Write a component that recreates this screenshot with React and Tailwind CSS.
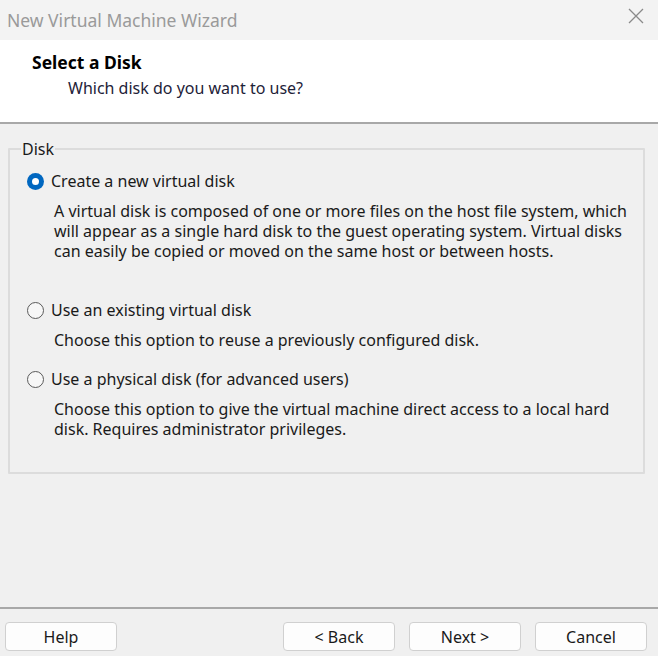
const diskOptions = [
  {
    id: "new",
    label: "Create a new virtual disk",
    lines: [
      "A virtual disk is composed of one or more files on the host file system, which",
      "will appear as a single hard disk to the guest operating system. Virtual disks",
      "can easily be copied or moved on the same host or between hosts.",
    ],
    checked: true,
    spacing: "mb-[38px]",
  },
  {
    id: "existing",
    label: "Use an existing virtual disk",
    lines: ["Choose this option to reuse a previously configured disk."],
    spacing: "mb-[18px]",
  },
  {
    id: "physical",
    label: "Use a physical disk (for advanced users)",
    lines: [
      "Choose this option to give the virtual machine direct access to a local hard",
      "disk. Requires administrator privileges.",
    ],
    spacing: "",
  },
];

function Radio({ checked }) {
  if (checked) {
    return (
      <span className="w-[17px] h-[17px] rounded-full bg-[#0067c0] flex items-center justify-center shrink-0">
        <span className="w-[7px] h-[7px] rounded-full bg-white" />
      </span>
    );
  }
  return <span className="w-[17px] h-[17px] rounded-full border border-[#5a5a5a] bg-[#f7f7f7] shrink-0" />;
}

function WizardButton({ children }) {
  return (
    <button className="w-[112px] h-[29px] rounded-[4px] border border-[#d0d0d0] bg-[#fdfdfd] text-[16px] text-[#1a1a1a]">
      {children}
    </button>
  );
}

export default function App() {
  return (
    <div
      className="w-[658px] h-[656px] flex flex-col bg-[#f0f0f0] text-[#1a1a1a] overflow-hidden"
      style={{ fontFamily: '"Noto Sans", "Open Sans", sans-serif' }}
    >
      {/* title bar */}
      <div className="h-[40px] bg-[#f3f3f3] flex items-center justify-between pl-[7px] pr-[14px]">
        <span className="text-[17.5px] text-[#9a9a9a]">New Virtual Machine Wizard</span>
        <svg width="16" height="16" viewBox="0 0 16 16" className="mb-[8px]">
          <path d="M1 1 L15 15 M15 1 L1 15" stroke="#8a8a8a" strokeWidth="1.3" fill="none" />
        </svg>
      </div>

      {/* header */}
      <div className="h-[82px] bg-white pl-[32px] pt-[11px]">
        <h1 className="text-[17.5px] font-bold leading-[22px] text-black">Select a Disk</h1>
        <p className="text-[16px] leading-[22px] pl-[36px] mt-[4px] text-[#1e2238]">Which disk do you want to use?</p>
      </div>
      <div className="h-[2px] bg-[#a8a8a8]" />

      {/* disk group */}
      <fieldset className="ml-[8px] mr-[13px] mt-[16px] h-[334px] border-2 border-[#dcdcdc] rounded-[1px]">
        <legend className="ml-[11px] px-[1px] text-[16px] leading-[18px]">Disk</legend>
        <div className="pl-[17px] pt-[12px] flex flex-col">
          {diskOptions.map((opt) => (
            <div key={opt.id} className={opt.spacing}>
              <label className="flex items-center gap-[7px] h-[22px] text-[16px]">
                <Radio checked={opt.checked} />
                <span>{opt.label}</span>
              </label>
              <div className="pl-[27px] mt-[9px] text-[16px] leading-[20px]">
                {opt.lines.map((line) => (
                  <p key={line}>{line}</p>
                ))}
              </div>
            </div>
          ))}
        </div>
      </fieldset>

      <div className="flex-1" />

      {/* footer */}
      <div className="h-[2px] bg-[#a8a8a8]" />
      <div className="h-[47px] flex items-start pt-[13px] pl-[5px] pr-[11px]">
        <WizardButton>Help</WizardButton>
        <div className="flex-1" />
        <div className="flex gap-[14px]">
          <WizardButton>&lt; Back</WizardButton>
          <WizardButton>Next &gt;</WizardButton>
          <WizardButton>Cancel</WizardButton>
        </div>
      </div>
    </div>
  );
}
